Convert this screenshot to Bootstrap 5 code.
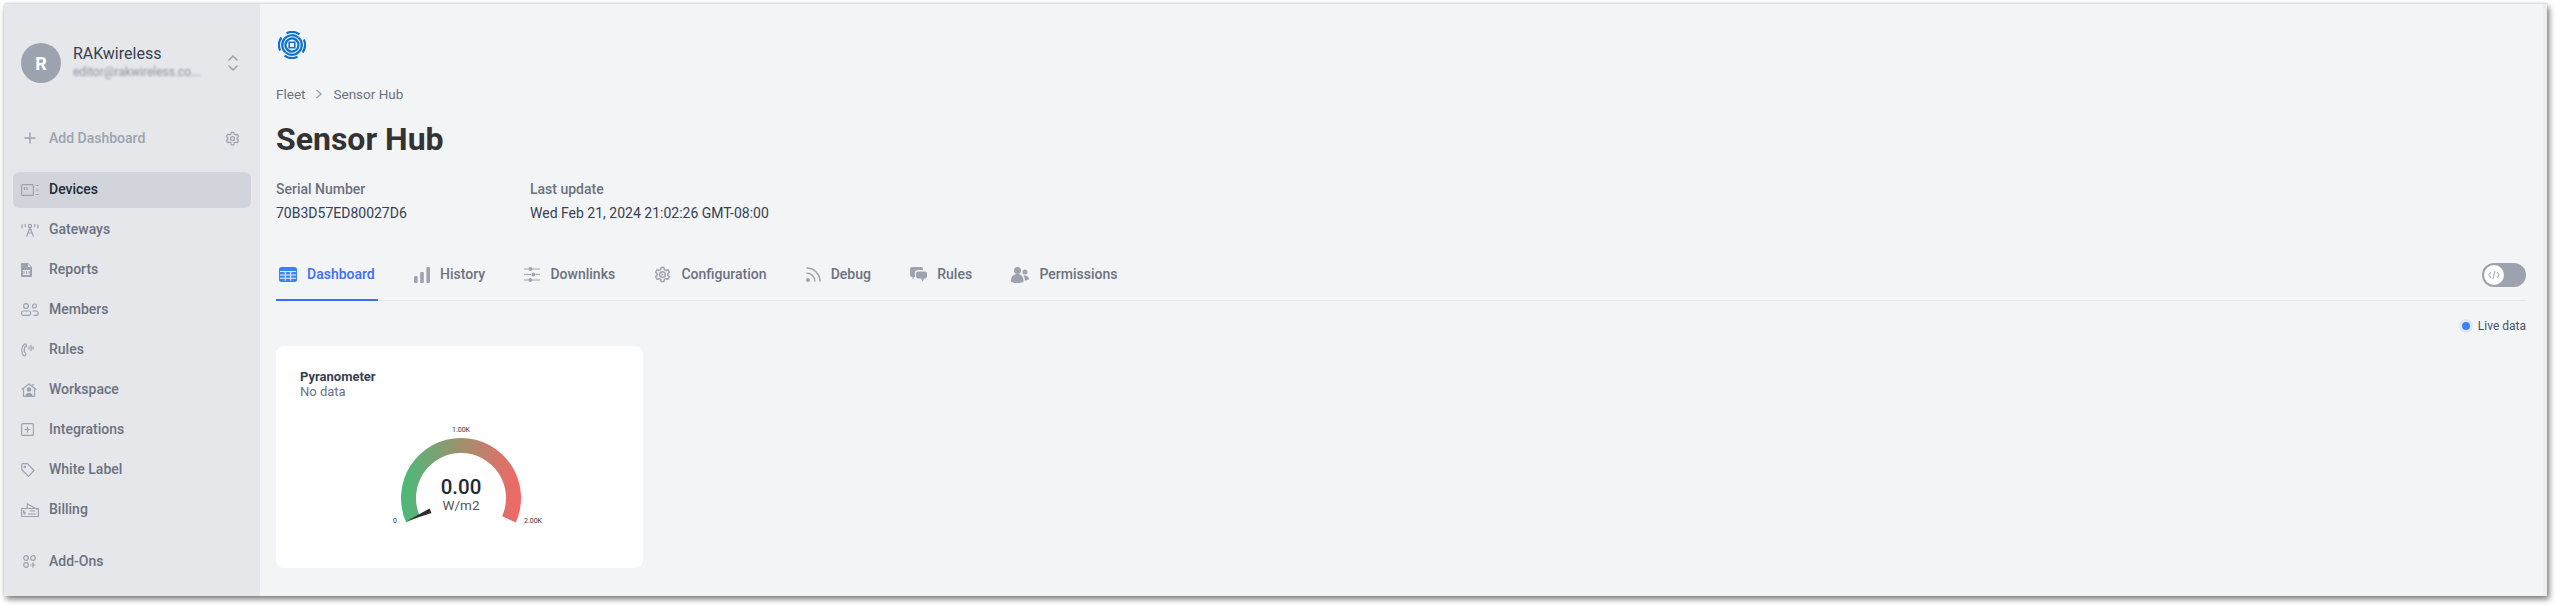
<!DOCTYPE html>
<html lang="en">
<head>
<meta charset="utf-8">
<title>Sensor Hub</title>
<link href="https://cdn.jsdelivr.net/npm/bootstrap@5.3.0/dist/css/bootstrap.min.css" rel="stylesheet">
<style>
html,body{height:100%;background:#fff;overflow:hidden}
body{font-family:Roboto,"Liberation Sans",sans-serif;padding:4px 9px 9px 4px;font-size:14px}
.app-window{height:592px;width:2543px;background:#f3f4f6;box-shadow:2px 3px 6px rgba(0,0,0,.55),0 -1px 2px rgba(0,0,0,.1)}
.side{width:256px;flex:none;background:#e5e7eb;padding:39px 9px 0}
.org{padding:0 8px;height:40px;margin-bottom:37px}
.org-avatar{width:40px;height:40px;border-radius:50%;background:#9ca3af;color:#fff;font-weight:700;font-size:18px;flex:none}
.org-name{font-size:16px;line-height:20px;color:#374151;margin-top:-3px}
.org-mail{font-size:12px;line-height:16px;color:#8b919c;filter:blur(1.3px);white-space:nowrap}
.add-row{height:36px;padding:0 11px 0 11px;color:#9ca3af;font-weight:500;margin-bottom:15.600px}
.side-link{display:flex;align-items:center;height:36px;padding:0 8px;margin-bottom:4px;border-radius:6px;color:#6b7280;font-weight:500;text-decoration:none;gap:0}
.side-link.on{background:#d1d5db;color:#1f2937}
.side-ico{width:28px;flex:none;margin-right:0;display:flex;color:#9ca3af}
.side-sep{margin-top:12px}
.main-pane{flex:1;min-width:0;padding:0 17px 0 16px;border-right:4px solid #eeeff1}
.brand-row{height:27px;margin:27px 0 0 2px}
.crumbs{margin-top:26px;line-height:20px;font-size:13.5px;color:#6b7280;gap:10px}
.page-h{font-size:32px;font-weight:700;line-height:40px;color:#333;margin:15px 0 0}
.meta-grid{margin-top:20px;gap:0}
.meta-a{width:254px}
.meta-k{font-weight:500;color:#6b7280;line-height:20px;margin-bottom:4px}
.meta-v{color:#374151;line-height:20px}
.tab-strip{margin-top:23px;border-bottom:1px solid #e5e7eb;height:55px}
.tab-list{gap:33.300px}
.tab-a{display:flex;align-items:center;gap:10px;height:54px;padding:4px 3px 0;margin-bottom:-1px;font-weight:500;color:#6b7280;text-decoration:none;border-bottom:2px solid transparent}
.tab-a svg{color:#9ca3af;flex:none}
.tab-a.on{color:#3b6ff5;border-bottom-color:#3b6ff5}
.tab-a.on svg{color:#3b82f6}
.code-toggle{width:44px;height:24px;border-radius:12px;background:#9ca3af;padding:2px;margin-top:3px}
.code-knob{width:20px;height:20px;border-radius:50%;background:#fff;color:#9ca3af}
.live-row{margin-top:17px;height:16px;font-size:12px;color:#4b5563;gap:8px}
.live-dot{width:8px;height:8px;border-radius:50%;background:#3b82f6;box-shadow:0 0 0 3px rgba(59,130,246,.1)}
.gauge-card{width:367px;height:222px;margin-top:12px;border:0;border-radius:8px;padding:24px;background:#fff}
.gauge-title{font-size:13px;font-weight:700;line-height:14px;color:#374151}
.gauge-sub{font-size:13px;line-height:14px;color:#6b7280;margin-top:1px}
.gauge-svg{display:block;margin:23px 0 0 76px}
.gauge-svg text{font-family:Roboto,"Liberation Sans",sans-serif}
</style>
</head>
<body>
<div class="app-window d-flex">
  <aside class="side">
    <div class="org d-flex align-items-center">
      <div class="org-avatar d-flex align-items-center justify-content-center">R</div>
      <div class="ms-2 flex-grow-1" style="min-width:0;padding-left:4px">
        <div class="org-name">RAKwireless</div>
        <div class="org-mail">editor@rakwireless.co...</div>
      </div>
      <svg width="12" height="18" viewBox="0 0 12 18" fill="none" stroke="#9ca3af" stroke-width="1.6" stroke-linecap="round" stroke-linejoin="round"><path d="M2 6l4-4 4 4M2 12l4 4 4-4"/></svg>
      <span style="width:4px"></span>
    </div>
    <div class="add-row d-flex align-items-center">
      <svg width="12" height="12" viewBox="0 0 12 12" stroke="#9ca3af" stroke-width="1.5" stroke-linecap="round"><path d="M6 1v10M1 6h10"/></svg>
      <span class="flex-grow-1" style="padding-left:13px">Add Dashboard</span>
      <svg width="15" height="15" viewBox="0 0 24 24" fill="none" stroke="#9ca3af" stroke-width="2"><path d="M10 2h4l.6 3 2.3 1.3 2.9-1 2 3.5-2.3 2v2.4l2.3 2-2 3.5-2.9-1-2.3 1.3-.6 3h-4l-.6-3-2.3-1.300-2.9 1-2-3.500 2.300-2v-2.400l-2.300-2 2-3.500 2.900 1L9.400 5z" stroke-linejoin="round"/><circle cx="12" cy="12" r="3.200"/></svg>
    </div>
    <nav class="d-flex flex-column">
      <a class="side-link on" href="#"><span class="side-ico"><svg width="18" height="12" viewBox="0 0 18 12" fill="none" stroke="#9ca3af" stroke-width="1.2"><rect x=".6" y=".6" width="11.800" height="10.800" rx="1"/><path d="M3.500 3v3M6 3v3M15 1.500h2.500M15 6h2.500M15 10.500h2.500"/></svg></span>Devices</a>
      <a class="side-link" href="#"><span class="side-ico"><svg width="18" height="14" viewBox="0 0 18 14" fill="none" stroke="#9ca3af" stroke-width="1.2"><circle cx="9" cy="3" r="1.600"/><path d="M9 4.500L5.500 13.500M9 4.500l3.500 9M6.500 10h5M1.500 1.500c-.8 1.200-.8 2.600 0 3.800M4.500 1c-.5 1-.5 2.200 0 3.200M16.500 1.500c.8 1.200.8 2.600 0 3.800M13.500 1c.5 1 .5 2.200 0 3.200"/></svg></span>Gateways</a>
      <a class="side-link" href="#"><span class="side-ico"><svg width="11" height="14" viewBox="0 0 11 14" fill="#9ca3af"><path d="M1 0h6l4 4v9a1 1 0 0 1-1 1H1a1 1 0 0 1-1-1V1a1 1 0 0 1 1-1z"/><path d="M2 7h7v5H2z" fill="#e5e7eb"/><path d="M3 8v3M5.500 8v3M8 8v3" stroke="#9ca3af" stroke-width="1"/><path d="M7 1v3h3" fill="#e5e7eb"/></svg></span>Reports</a>
      <a class="side-link" href="#"><span class="side-ico"><svg width="18" height="13" viewBox="0 0 18 13" fill="none" stroke="#9ca3af" stroke-width="1.2"><circle cx="5" cy="3" r="2.400"/><circle cx="13.500" cy="3" r="2"/><rect x=".6" y="8" width="9" height="4.400" rx="1.800"/><path d="M11.500 8h3.500a2.200 2.200 0 0 1 2.200 2.200 2.200 2.200 0 0 1-2.200 2.200h-2.500"/></svg></span>Members</a>
      <a class="side-link" href="#"><span class="side-ico"><svg width="13" height="15" viewBox="0 0 13 15" fill="none" stroke="#9ca3af" stroke-width="1.200"><path d="M3.500 2C1 4 .4 7 1 10c.3 2 1.500 4 3 4l1-2-1.500-2C3 8 3.200 6.500 4 5l1.500-.5L5 2z"/><path d="M8 4.500v3M10 3v6M12 4.500v3"/></svg></span>Rules</a>
      <a class="side-link" href="#"><span class="side-ico"><svg width="16" height="14" viewBox="0 0 16 14" fill="none" stroke="#9ca3af" stroke-width="1.200"><path d="M.8 6.500L8 1l7.200 5.500M2.500 6v7.400h11V6"/><circle cx="8" cy="6.500" r="1.700" fill="#9ca3af"/><path d="M5 13.400c0-4 6-4 6 0z" fill="#9ca3af"/><path d="M12 1v2"/></svg></span>Workspace</a>
      <a class="side-link" href="#"><span class="side-ico"><svg width="13" height="13" viewBox="0 0 13 13" fill="none" stroke="#9ca3af" stroke-width="1.200"><rect x=".6" y=".6" width="11.800" height="11.800" rx="1"/><path d="M6.500 3.500v6M3.500 6.500h6"/></svg></span>Integrations</a>
      <a class="side-link" href="#"><span class="side-ico"><svg width="14" height="14" viewBox="0 0 14 14" fill="none" stroke="#9ca3af" stroke-width="1.200" stroke-linejoin="round"><path d="M.7 1.500a.8.8 0 0 1 .8-.8h5l6.500 6.800-5.500 5.800L.7 6.500z"/><circle cx="3.800" cy="3.800" r=".7" fill="#9ca3af"/></svg></span>White Label</a>
      <a class="side-link" href="#"><span class="side-ico"><svg width="18" height="14" viewBox="0 0 18 14" fill="none" stroke="#9ca3af" stroke-width="1.200"><path d="M.6 5.500h16.800v8H.6z"/><path d="M6 5.500L6.500 1l10 5.500M4 8h-1.500v1.500h1.500v1.500h-1.500M7 11h8M9 8h5"/></svg></span>Billing</a>
      <a class="side-link side-sep" href="#"><span class="side-ico"><svg width="13" height="13" viewBox="0 0 13 13" fill="none" stroke="#9ca3af" stroke-width="1.200" style="margin-left:2px"><circle cx="3" cy="3" r="2.300"/><circle cx="10" cy="3" r="2.300"/><circle cx="3" cy="10" r="2.300"/><path d="M10 7.500v5M7.500 10h5"/></svg></span>Add-Ons</a>
    </nav>
  </aside>
  <main class="main-pane">
    <div class="brand-row">
      <svg width="28" height="28" viewBox="-14 -14 28 28" fill="none" stroke="#0f72d0" stroke-width="2.200">
        <defs><g id="logoBlade"><path d="M-5.500 -11.800A13 13 0 0 1 7.500 -10.600"/><path d="M-7.500 -6.300A9.800 9.800 0 0 1 6.300 -7.500"/><path d="M-6.400 -1.700A6.600 6.600 0 0 1 3.300 -5.700"/></g></defs>
        <use href="#logoBlade"/><use href="#logoBlade" transform="rotate(90)"/><use href="#logoBlade" transform="rotate(180)"/><use href="#logoBlade" transform="rotate(270)"/>
        <path d="M-2.800 -2.800H2.800V2.800H-2.800Z" stroke-width="1.600"/>
      </svg>
    </div>
    <div class="crumbs d-flex align-items-center">
      <span>Fleet</span>
      <svg width="8" height="10" viewBox="0 0 8 10" fill="none" stroke="#9ca3af" stroke-width="1.400"><path d="M1.500 1l4.500 4-4.500 4"/></svg>
      <span>Sensor Hub</span>
    </div>
    <h1 class="page-h">Sensor Hub</h1>
    <div class="meta-grid d-flex">
      <div class="meta-a"><div class="meta-k">Serial Number</div><div class="meta-v">70B3D57ED80027D6</div></div>
      <div><div class="meta-k">Last update</div><div class="meta-v">Wed Feb 21, 2024 21:02:26 GMT-08:00</div></div>
    </div>
    <div class="tab-strip d-flex justify-content-between align-items-center">
      <nav class="tab-list d-flex align-items-center">
        <a class="tab-a on" href="#"><svg width="18" height="15" viewBox="0 0 18 15" fill="currentColor"><rect width="18" height="15" rx="2.500"/><path d="M1 4.600h16M1 8h16M1 11.200h16M6.300 4.600v9M11.700 4.600v9" stroke="#f3f4f6" stroke-width="1"/></svg>Dashboard</a>
        <a class="tab-a" href="#"><svg width="16" height="16" viewBox="0 0 16 16" fill="currentColor"><rect y="9" width="3.600" height="7" rx="1.200"/><rect x="6.200" y="5" width="3.600" height="11" rx="1.200"/><rect x="12.400" width="3.600" height="16" rx="1.200"/></svg>History</a>
        <a class="tab-a" href="#"><svg width="16" height="15" viewBox="0 0 16 15" fill="none" stroke="currentColor" stroke-width="1.200"><path d="M0 2h4.500M8 2h8M0 7.500h7M11.500 7.500H16M0 13h4.500M8 13h8"/><circle cx="6.300" cy="2" r="1.300" fill="currentColor"/><circle cx="9.300" cy="7.500" r="1.300" fill="currentColor"/><circle cx="6.300" cy="13" r="1.300" fill="currentColor"/></svg>Downlinks</a>
        <a class="tab-a" href="#"><svg width="17" height="17" viewBox="0 0 24 24" fill="none" stroke="currentColor" stroke-width="2"><path d="M10 2h4l.6 3 2.300 1.300 2.900-1 2 3.500-2.300 2v2.400l2.300 2-2 3.500-2.900-1-2.300 1.300-.6 3h-4l-.6-3-2.300-1.300-2.900 1-2-3.500 2.300-2v-2.400l-2.300-2 2-3.500 2.900 1L9.400 5z" stroke-linejoin="round"/><circle cx="12" cy="12" r="4"/><path d="M10.800 10l3 2-3 2z" fill="currentColor" stroke="none"/></svg>Configuration</a>
        <a class="tab-a" href="#"><svg width="15" height="15" viewBox="0 0 15 15" fill="none" stroke="currentColor" stroke-width="1.500"><path d="M.5 1c7.500 0 13.500 6 13.500 13.500M.5 6c4.700 0 8.500 3.800 8.500 8.500"/><circle cx="2" cy="13" r="2" fill="currentColor" stroke="none"/></svg>Debug</a>
        <a class="tab-a" href="#"><svg width="17" height="16" viewBox="0 0 17 16" fill="currentColor"><path d="M2 0h9a2 2 0 0 1 2 2v1H8a3 3 0 0 0-3 3v4H4l-1 3-.6-3H2a2 2 0 0 1-2-2V2a2 2 0 0 1 2-2z"/><path d="M8 4.500h7a2 2 0 0 1 2 2v3a2 2 0 0 1-2 2h-1l-1.200 3.500-1.800-3.500H8a2 2 0 0 1-2-2v-3a2 2 0 0 1 2-2z"/></svg>Rules</a>
        <a class="tab-a" href="#"><svg width="18" height="16" viewBox="0 0 18 16" fill="currentColor"><circle cx="6.500" cy="3.500" r="3.500"/><circle cx="14" cy="5" r="2.500"/><path d="M0 14c0-5 3-7 6.500-7s6 2.500 6 6.500v1.500c-4 1.500-9 1.500-12.500 0z"/><path d="M13.500 8.500c2.500 0 4.500 1.500 4.500 4l-4.200 1.300c0-2-.3-3.800-1.300-5z"/></svg>Permissions</a>
      </nav>
      <div class="code-toggle" role="switch" aria-checked="false">
        <div class="code-knob d-flex align-items-center justify-content-center">
          <svg width="12" height="10" viewBox="0 0 12 10" fill="none" stroke="currentColor" stroke-width="1"><path d="M3 2L.8 5 3 8M9 2l2.200 3L9 8M7 1L5 9"/></svg>
        </div>
      </div>
    </div>
    <div class="live-row d-flex align-items-center justify-content-end"><span class="live-dot"></span><span>Live data</span></div>
    <div class="card gauge-card">
      <div class="gauge-title">Pyranometer</div>
      <div class="gauge-sub">No data</div>
      <svg class="gauge-svg" width="170" height="110" viewBox="0 0 170 110">
        <defs><linearGradient id="gaugeFill" x1="0" x2="1" y1="0" y2="0"><stop offset="0" stop-color="#48bb78"/><stop offset="1" stop-color="#f56565"/></linearGradient></defs>
        <path d="M30.200 100.400A60 60 0 1 1 139.800 100.400L126.100 94.300A45 45 0 1 0 43.900 94.300Z" fill="url(#gaugeFill)"/>
        <path d="M31 99L53.500 86.500 55.500 91Z" fill="#2d2d2d"/>
        <text x="85" y="10" text-anchor="middle" font-size="7" fill="#333">1.00K</text>
        <text x="19" y="101" text-anchor="middle" font-size="7" fill="#333">0</text>
        <text x="157" y="101" text-anchor="middle" font-size="7" fill="#333">2.00K</text>
        <text x="85" y="72" text-anchor="middle" font-size="20.500" font-weight="500" fill="#1f2937">0.00</text>
        <text x="85" y="88" text-anchor="middle" font-size="13.500" fill="#555">W/m2</text>
      </svg>
    </div>
  </main>
</div>
<script src="https://cdn.jsdelivr.net/npm/bootstrap@5.3.0/dist/js/bootstrap.bundle.min.js"></script>
</body>
</html>
